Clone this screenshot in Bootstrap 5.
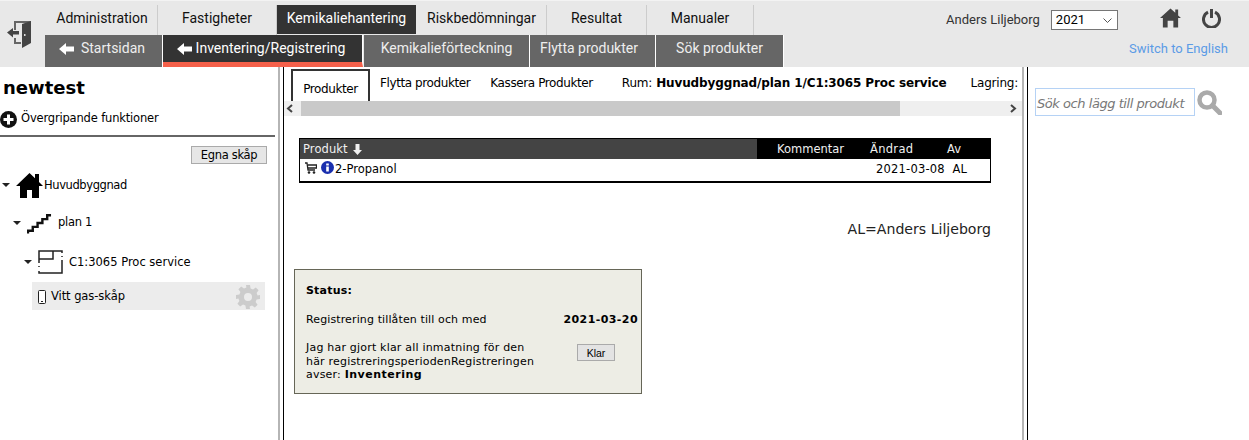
<!DOCTYPE html>
<html lang="sv">
<head>
<meta charset="utf-8">
<title>Inventering</title>
<link href="https://cdn.jsdelivr.net/npm/bootstrap@5.3.0/dist/css/bootstrap.min.css" rel="stylesheet">
<style>
html,body{height:440px;overflow:hidden;background:#fff}
body{font-family:"DejaVu Sans",sans-serif;font-size:11.5px;color:#000;line-height:1.2}
.hdr{height:67px;background:#e8e8e8;border-top:1px solid #f3f3f3;font-family:Roboto,sans-serif}
.exit-box{width:45px;padding:20px 0 0 7px}
.menus{width:739px}
.top-row{height:34px;padding-top:4px}
.top-item{height:30px;font-size:14px;color:#111;text-decoration:none;display:flex;align-items:center;justify-content:center;border-right:1px solid #ccc;padding-bottom:3px}
.top-item.on{background:#333;color:#fff;border-right:0;height:29px}
.sub-row{height:32px}
.sub-item{height:32px;font-size:14px;color:#eee;background:#666;text-decoration:none;display:flex;align-items:center;justify-content:center;gap:7px;border-right:1px solid #fff;padding-bottom:5px}
.sub-item.on{background:#333;color:#fff;border-bottom:5px solid #f5604a;padding:0 3px 0 0;margin-right:1px;gap:4px}
.w112{width:113px;padding-left:2px}.w120{width:119px}.w139{width:139px}.w130{width:131px;padding-left:1px}.w100{width:100px}.w106{width:107px}
.s117{width:118px;padding-right:3px}.s199{width:200px}.s165{width:166px}.s125{width:126px;padding-right:7px}.s128{width:128px}
.user-box{flex:1}
.user-name{font-size:13px;color:#333;margin:11px 11px 0 162px;white-space:nowrap}
.year{width:67px;height:20px;margin-top:9px;border:1px solid #767676;font-size:13px;font-family:Roboto,sans-serif;padding:0 0 0 4px;color:#000;appearance:none;background:#fff url("data:image/svg+xml,%3Csvg xmlns='http://www.w3.org/2000/svg' width='9' height='5'%3E%3Cpath d='M.5.5l4 4 4-4' fill='none' stroke='%23555'/%3E%3C/svg%3E") no-repeat right 5px center}
.hic{margin-left:42px;margin-top:7px}
.lang{font-size:13px;color:#5b9be6;text-decoration:none;display:block;text-align:right;margin:11px 21px 0 0}
.body-row{height:373px}
.side{width:278px;flex:none}
.split-l{width:6px;flex:none;border-right:1.5px solid #000;border-left:2px solid #b5b5b5;box-sizing:border-box}
.title{font-size:18px;font-weight:700;margin:9px 0 0 3px;line-height:24px}
.over{margin:10px 0 0 0;display:flex;align-items:center;gap:4px;height:18px;letter-spacing:-.17px}
.rule{border-top:2px solid #666;margin:7px 3px 0 0;opacity:1}
.own{display:block;margin:9px 11px 0 auto;width:76px;height:18px;padding:0;background:#e6e6e6;border:1px solid #aaa;font-size:11.5px;line-height:15px;font-family:"DejaVu Sans",sans-serif;letter-spacing:-.3px;color:#000}
.tree{height:38px;display:flex;align-items:center}
.low{padding-top:2px}
.caret-t{width:0;height:0;border:4px solid transparent;border-top:4px solid #222;border-bottom:0;flex:none}
.cab{margin-left:32px;width:233px;height:28px;background:#ececec;display:flex;align-items:center;padding:1px 0 0 6px;gap:5px;letter-spacing:-.07px}
.center{flex:1;min-width:0;padding-top:2px}
.tabs{height:32px;padding-left:7px;font-size:12px;white-space:nowrap;overflow:hidden}
.tab-a{width:79px;height:32px;border:2px solid #333;border-bottom:0;display:flex;align-items:center;justify-content:center;letter-spacing:-.4px;padding-top:6px}
.tab-b{margin-left:10px;padding-top:0;height:29px;display:flex;align-items:center;letter-spacing:-.4px}
.rum{margin-left:29px;height:29px;display:flex;align-items:center;letter-spacing:-.2px}
.rum b{margin-left:4px;letter-spacing:-.12px}
.scr{height:15px;background:#efefef;display:flex;align-items:center;position:relative;justify-content:space-between;padding:0 5px 0 2px}
.thumb{position:absolute;left:17px;top:0;width:599px;height:15px;background:#c9c9c9}
.prod{margin:22px 0 0 15px;width:692px;border:1px solid #000;border-bottom-width:2px;height:45px}
.phead{height:20px;background:#000;color:#f0f0f0;display:flex;align-items:center;padding-top:0}
.phead-a{width:457px;height:20px;background:#444;display:flex;align-items:center;padding:1px 0 0 3px;gap:5px;letter-spacing:.1px}
.pc1{width:93px;padding:1px 0 0 20px;letter-spacing:0}.pc2{width:97px;letter-spacing:.3px;padding:1px 0 0 20px}.pc3{padding-top:1px}
.prow{display:flex;align-items:center;padding:4px 0 0 5px;height:18px}
.pdate{margin-left:auto;width:114px;letter-spacing:.2px}
.legend{width:692px;margin:37px 0 0 15px;text-align:right;font-size:14.1px;line-height:18px;color:#222}
.status{width:348px;height:125px;margin:31px 0 0 10px;background:#ededE5;border:1px solid #666657;padding:14px 3px 0 11px;font-size:11px;letter-spacing:.2px}
.status-grid{display:grid;grid-template-columns:1fr auto}
.status-text{line-height:13.4px;margin-top:-1px}
.klar{width:38px;height:17px;padding:0;margin:2px 0 0 13px;background:#e3e3e3;border:1px solid #aaa;font-size:10.5px;font-family:"Liberation Sans",sans-serif;line-height:14px;color:#000;border-radius:0}
.right{width:221px;flex:none;padding:21px 0 0 7px}
.search{width:160px;height:28px;border:1px solid #b5d2f5;font-style:italic;font-size:13px;padding:3px 1px 0;letter-spacing:-.45px;color:#777;display:flex;align-items:center;white-space:nowrap;overflow:hidden}
.mag{margin:2px 0 0 2px}
</style>
</head>
<body>
<header class="hdr d-flex">
  <div class="exit-box">
    <svg width="25" height="27" viewBox="0 0 25 27"><path d="M7 0h17v2H9v7H7zM7 17h2v4h5v2H7z" fill="#666"/><path d="M15 3l9-3v22l-9 5z" fill="#444"/><path d="M0 11.500L6 7v3h6v3.500H6v3z" fill="#444"/><rect x="17" y="13" width="1.500" height="2" fill="#ddd"/></svg>
  </div>
  <div class="menus">
    <nav class="top-row d-flex">
      <a class="top-item w112" href="#">Administration</a>
      <a class="top-item w120" href="#">Fastigheter</a>
      <a class="top-item w139 on" href="#">Kemikaliehantering</a>
      <a class="top-item w130" href="#">Riskbedömningar</a>
      <a class="top-item w100" href="#">Resultat</a>
      <a class="top-item w106" href="#">Manualer</a>
    </nav>
    <nav class="sub-row d-flex">
      <a class="sub-item s117" href="#"><svg width="15" height="12" viewBox="0 0 15 12"><path d="M0 6l7-6v3.500h8v5H7V12z" fill="#fff"/></svg>Startsidan</a>
      <a class="sub-item s199 on" href="#"><svg width="15" height="12" viewBox="0 0 15 12"><path d="M0 6l7-6v3.500h8v5H7V12z" fill="#fff"/></svg>Inventering/Registrering</a>
      <a class="sub-item s165" href="#">Kemikalieförteckning</a>
      <a class="sub-item s125" href="#">Flytta produkter</a>
      <a class="sub-item s128" href="#">Sök produkter</a>
    </nav>
  </div>
  <div class="user-box">
    <div class="d-flex align-items-start">
      <span class="user-name">Anders Liljeborg</span>
      <select class="year" aria-label="År"><option>2021</option></select>
      <svg class="hic" width="21" height="20" viewBox="0 0 22 20"><path d="M11 0l5 4.500V1h3v6.300l3 2.700h-3v10h-5v-7H8v7H3V10H0z" fill="#444"/></svg>
      <svg class="hic" style="margin-left:21px" width="19" height="20" viewBox="0 0 19 20"><path d="M6 4.200A8 8 0 1 0 13 4.200M9.500 1v9" fill="none" stroke="#444" stroke-width="3"/></svg>
    </div>
    <a class="lang" href="#">Switch to English</a>
  </div>
</header>
<main class="body-row d-flex">
  <aside class="side">
    <div class="title">newtest</div>
    <div class="over"><svg width="17" height="17" viewBox="0 0 17 17"><circle cx="8.500" cy="8.500" r="8.500" fill="#111"/><path d="M7 3.500h3V7h3.500v3H10v3.500H7V10H3.500V7H7z" fill="#fff"/></svg><span>Övergripande funktioner</span></div>
    <hr class="rule">
    <button class="own" type="button">Egna skåp</button>
    <div class="tree" style="margin-top:2px;padding-left:2px;letter-spacing:-.4px"><i class="caret-t"></i><svg style="margin:0 1px 0 6px" width="27" height="26" viewBox="0 0 27 26"><path d="M13.500 1L19 6.300V2h4v8l4 4h-4v12h-7v-8h-5v8H4V14H0z" fill="#000"/></svg><span class="low">Huvudbyggnad</span></div>
    <div class="tree" style="padding-left:13px;letter-spacing:-.3px"><i class="caret-t"></i><svg style="margin:0 6px 0 6px" width="25" height="24" viewBox="0 0 26 24"><path d="M1 23v-3h5v-4h5v-4h5V8h5V4h4" fill="none" stroke="#111" stroke-width="2.500"/></svg>plan 1</div>
    <div class="tree" style="padding-left:24px;height:39px"><i class="caret-t"></i><svg style="margin:0 6px" width="25" height="24" viewBox="0 0 25 24"><path d="M1 13V1h23v2M1 9h14V1M24 6v1M24 10v13H1v-2M1 16v1" fill="none" stroke="#222" stroke-width="1.500"/></svg><span class="low">C1:3065 Proc service</span></div>
    <div class="cab" style="margin-top:1px"><svg width="8" height="14" viewBox="0 0 8 14"><rect x=".5" y=".5" width="7" height="13" rx="1" fill="#fff" stroke="#222"/><rect x="3" y="11" width="2" height="1" fill="#222"/></svg><span class="flex-grow-1">Vitt gas-skåp</span><svg style="margin-right:5px" width="24" height="24" viewBox="0 0 24 24"><path fill="#ccc" fill-rule="evenodd" d="M10 0h4l.6 3.400 2.400 1 2.800-2 2.800 2.800-2 2.800 1 2.400L24 10v4l-3.400.6-1 2.400 2 2.800-2.800 2.800-2.800-2-2.400 1L14 24h-4l-.6-3.400-2.400-1-2.800 2-2.800-2.800 2-2.800-1-2.400L0 14v-4l3.400-.6 1-2.400-2-2.800 2.800-2.800 2.800 2 2.400-1zM12 8a4 4 0 1 0 0 8 4 4 0 0 0 0-8z"/></svg></div>
  </aside>
  <div class="split-l"></div>
  <section class="center">
    <div class="tabs d-flex">
      <div class="tab-a">Produkter</div>
      <div class="tab-b">Flytta produkter</div>
      <div class="tab-b" style="margin-left:20px">Kassera Produkter</div>
      <div class="rum">Rum: <b>Huvudbyggnad/plan 1/C1:3065 Proc service</b><span style="margin-left:24px">Lagring:</span></div>
    </div>
    <div class="scr">
      <div class="thumb"></div>
      <svg width="8" height="9" viewBox="0 0 8 9"><path d="M6 1L2 4.500 6 8" fill="none" stroke="#444" stroke-width="2"/></svg>
      <svg width="8" height="9" viewBox="0 0 8 9"><path d="M2 1l4 3.500L2 8" fill="none" stroke="#444" stroke-width="2"/></svg>
    </div>
    <div class="prod">
      <div class="phead">
        <div class="phead-a">Produkt <svg width="9" height="11" viewBox="0 0 9 11"><path d="M2.500 0h4v6H9l-4.500 5L0 6h2.500z" fill="#f0f0f0"/></svg></div>
        <div class="pc1">Kommentar</div><div class="pc2">Ändrad</div><div class="pc3">Av</div>
      </div>
      <div class="prow">
        <svg width="12" height="12" viewBox="0 0 12 12" style="margin-top:-4px"><path d="M0 1h2l1 7h7M3 3h8.500v3H3" fill="none" stroke="#222" stroke-width="1.300"/><circle cx="4" cy="10.500" r="1.300" fill="#222"/><circle cx="9" cy="10.500" r="1.300" fill="#222"/></svg>
        <svg class="ms-1" width="13" height="13" viewBox="0 0 13 13" style="margin-top:-5px"><circle cx="6.500" cy="6.500" r="6.500" fill="#1a2fae"/><rect x="5.200" y="5.500" width="2.600" height="5" fill="#fff"/><rect x="5.200" y="2.500" width="2.600" height="2" fill="#fff"/></svg>
        <span style="margin-left:1px">2-Propanol</span>
        <span class="pdate">2021-03-08 &nbsp;AL</span>
      </div>
    </div>
    <div class="legend">AL=Anders Liljeborg</div>
    <div class="status">
      <b>Status:</b>
      <div class="status-grid" style="margin-top:16px">
        <div style="letter-spacing:.12px">Registrering tillåten till och med</div><b style="letter-spacing:.42px">2021-03-20</b>
      </div>
      <div class="status-grid" style="margin-top:16px;grid-template-columns:235px 1fr;align-items:start">
        <div class="status-text">Jag har gjort klar all inmatning för den här registreringsperiodenRegistreringen avser: <b style="letter-spacing:.5px">Inventering</b></div>
        <div class="text-center"><button type="button" class="btn klar">Klar</button></div>
      </div>
    </div>
  </section>
  <div class="split-l"></div>
  <aside class="right d-flex">
    <div class="search">Sök och lägg till produkt</div>
    <svg class="mag" width="25" height="25" viewBox="0 0 25 25"><circle cx="10" cy="10" r="7.500" fill="none" stroke="#aaa" stroke-width="4.500"/><path d="M15.500 15.500L23 23" stroke="#aaa" stroke-width="5" stroke-linecap="round"/></svg>
  </aside>
</main>
<script src="https://cdn.jsdelivr.net/npm/bootstrap@5.3.0/dist/js/bootstrap.bundle.min.js"></script>
</body>
</html>
